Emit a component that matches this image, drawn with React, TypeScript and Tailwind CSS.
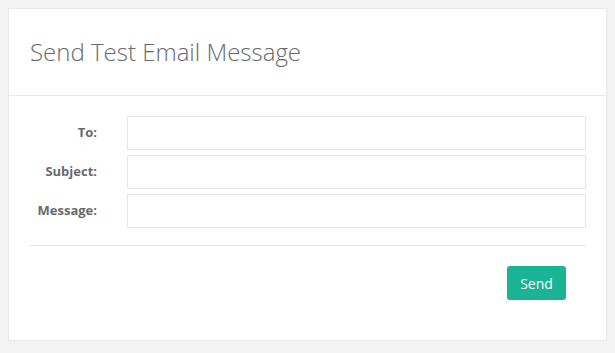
import React from "react";

const fields = ["To:", "Subject:", "Message:"];

export default function App() {
  return (
    <div
      className="min-h-[353px] w-full bg-[#f3f3f4] p-2 text-[#676a6c]"
      style={{ fontFamily: '"Open Sans", "Liberation Sans", sans-serif' }}
    >
      <div className="border border-[#e7eaec] bg-white">
        <div className="flex h-[87px] items-center border-b border-[#e7eaec] px-[21px]">
          <h2 className="text-[24px] font-light leading-none text-[#676a6c]">Send Test Email Message</h2>
        </div>
        <div className="px-5 pt-5 pb-10">
          <div className="flex flex-col gap-[5px]">
            {fields.map((label) => (
              <div key={label} className="flex items-center">
                <label className="w-[68px] shrink-0 text-right text-[13px] font-bold">{label}</label>
                <input
                  type="text"
                  className="ml-[30px] h-[34px] flex-1 border border-[#e5e6e7] bg-white px-3 text-[13px] outline-none"
                />
              </div>
            ))}
          </div>
          <div className="mt-[17px] border-t border-[#e7eaec]" />
          <div className="mt-5 flex justify-end pr-5">
            <button className="h-[34px] w-[59px] rounded-[3px] bg-[#1ab394] text-[14px] text-white">Send</button>
          </div>
        </div>
      </div>
    </div>
  );
}
